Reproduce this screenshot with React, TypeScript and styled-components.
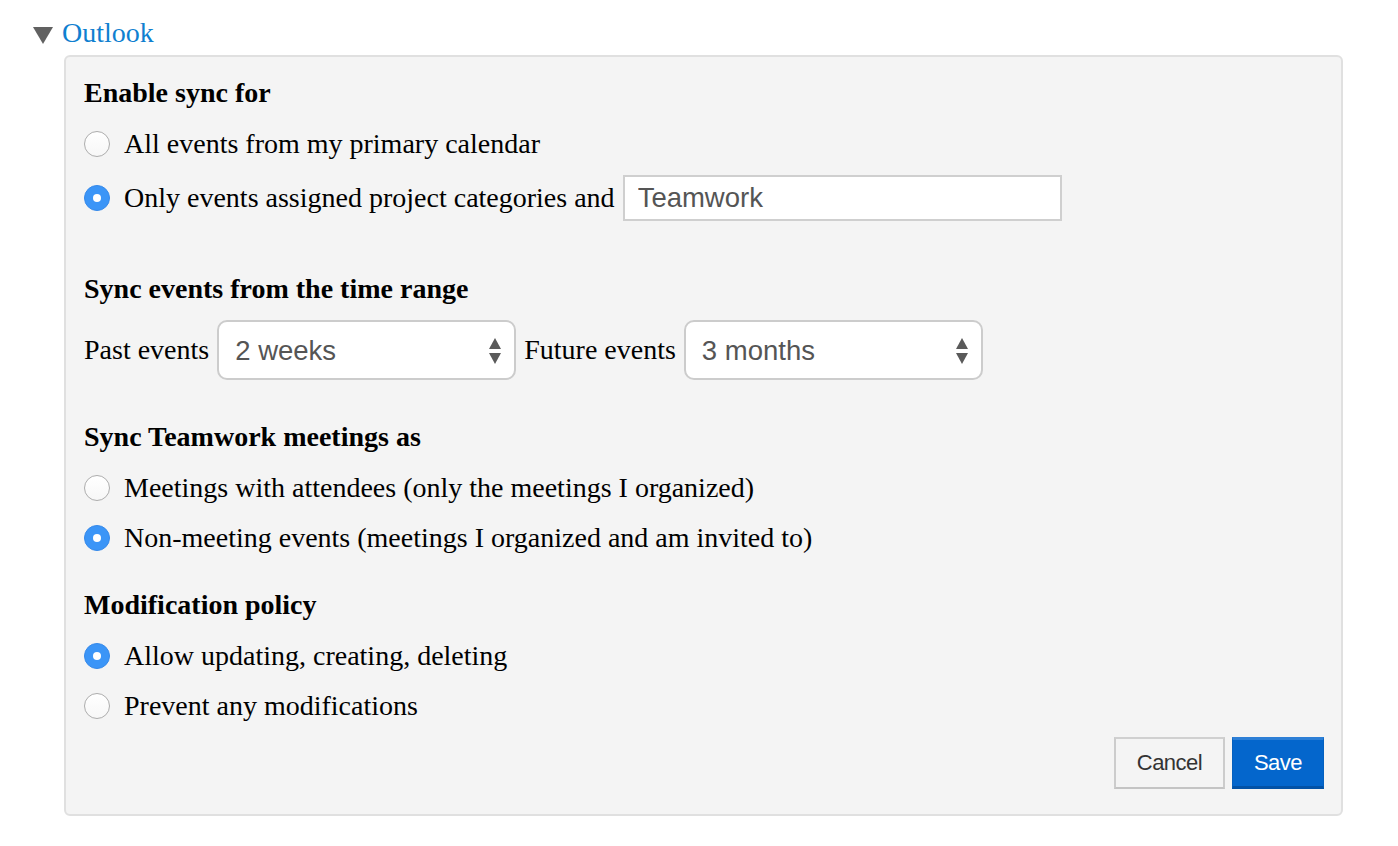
import styled, { createGlobalStyle } from 'styled-components';

const GlobalStyle = createGlobalStyle`
  body {
    margin: 0;
    background: #ffffff;
    font-family: "Liberation Serif", "Times New Roman", serif;
  }
`;

const Page = styled.div`
  width: 1398px;
  height: 846px;
  padding-top: 11px;
  box-sizing: border-box;
`;

const Header = styled.div`
  height: 44px;
  display: flex;
  align-items: center;
  padding-left: 33px;
  gap: 9px;
`;

const Caret = styled.span`
  width: 0;
  height: 0;
  margin-top: 4px;
  border-left: 10px solid transparent;
  border-right: 10px solid transparent;
  border-top: 17px solid #616161;
`;

const Title = styled.a`
  font-size: 28px;
  color: #0f80d0;
  text-decoration: none;
  line-height: 1;
`;

const Panel = styled.div`
  margin-left: 64px;
  width: 1279px;
  box-sizing: border-box;
  background: #f4f4f4;
  border: 2px solid #e0e0e0;
  border-radius: 6px;
  padding: 16px 17px 25px 18px;
`;

const Section = styled.section<{ $top: number }>`
  margin-top: ${(p) => p.$top}px;
`;

const Heading = styled.h3`
  margin: 0 0 6px;
  height: 40px;
  display: flex;
  align-items: center;
  font-size: 28px;
  font-weight: bold;
  color: #000;
`;

const Options = styled.div<{ $gap: number }>`
  display: flex;
  flex-direction: column;
  gap: ${(p) => p.$gap}px;
`;

const OptionRow = styled.label`
  height: 50px;
  display: flex;
  align-items: center;
  font-size: 28px;
  color: #000;
`;

const Radio = styled.span<{ $checked?: boolean }>`
  width: 26px;
  height: 26px;
  box-sizing: border-box;
  border-radius: 50%;
  margin-right: 14px;
  flex-shrink: 0;
  display: flex;
  align-items: center;
  justify-content: center;
  background: ${(p) => (p.$checked ? '#3b95f7' : 'linear-gradient(#ffffff, #f7f7f7)')};
  border: ${(p) => (p.$checked ? '1px solid #3589ea' : '1px solid #adadad')};
  &::after {
    content: '';
    display: ${(p) => (p.$checked ? 'block' : 'none')};
    width: 8px;
    height: 8px;
    border-radius: 50%;
    background: #ffffff;
  }
`;

const TextInput = styled.input`
  margin-left: 8px;
  width: 439px;
  height: 46px;
  box-sizing: border-box;
  border: 2px solid #cfcfcf;
  background: #ffffff;
  padding: 0 13px;
  font-family: "Liberation Sans", Arial, sans-serif;
  font-size: 27.5px;
  color: #555555;
  outline: none;
`;

const RangeRow = styled.div`
  margin-top: 11px;
  height: 60px;
  display: flex;
  align-items: center;
  font-size: 28px;
  color: #000;
`;

const RangeLabel = styled.span`
  margin-right: 8px;
`;

const Select = styled.div`
  width: 299px;
  height: 60px;
  flex-shrink: 0;
  box-sizing: border-box;
  border: 2px solid #cccccc;
  border-radius: 10px;
  background: #ffffff;
  margin-right: 8px;
  padding: 2px 12px 0 16px;
  display: flex;
  align-items: center;
  justify-content: space-between;
  font-family: "Liberation Sans", Arial, sans-serif;
  font-size: 27.5px;
  color: #555555;
`;

const Footer = styled.div`
  margin-top: 6px;
  display: flex;
  justify-content: flex-end;
  gap: 7px;
`;

const Button = styled.button<{ $primary?: boolean }>`
  height: 52px;
  box-sizing: border-box;
  font-family: "Liberation Sans", Arial, sans-serif;
  font-size: 22px;
  letter-spacing: -0.5px;
  cursor: pointer;
  padding: 0;
  width: ${(p) => (p.$primary ? '92px' : '111px')};
  color: ${(p) => (p.$primary ? '#ffffff' : '#333333')};
  background: ${(p) => (p.$primary ? '#0466cc' : '#f4f4f4')};
  border: ${(p) => (p.$primary ? '1px solid #0460bf' : '2px solid #cccccc')};
  border-bottom: ${(p) => (p.$primary ? '3px solid #0352a6' : '2px solid #c4c4c4')};
  border-top: ${(p) => (p.$primary ? '3px solid #2d7fd6' : '2px solid #d0d0d0')};
`;

const Arrows = () => (
  <svg width="14" height="28" viewBox="0 0 14 28">
    <path d="M7 1 L13 12 L1 12 Z" fill="#5a5a5a" />
    <path d="M1 16 L13 16 L7 27 Z" fill="#5a5a5a" />
  </svg>
);

const App = () => {
  return (
    <Page>
      <GlobalStyle />
      <Header>
        <Caret />
        <Title href="#">Outlook</Title>
      </Header>
      <Panel>
        <Section $top={0}>
          <Heading>Enable sync for</Heading>
          <Options $gap={4}>
            <OptionRow>
              <Radio />
              All events from my primary calendar
            </OptionRow>
            <OptionRow>
              <Radio $checked />
              Only events assigned project categories and
              <TextInput defaultValue="Teamwork" />
            </OptionRow>
          </Options>
        </Section>

        <Section $top={46}>
          <Heading>Sync events from the time range</Heading>
          <RangeRow>
            <RangeLabel>Past events</RangeLabel>
            <Select>
              2 weeks
              <Arrows />
            </Select>
            <RangeLabel>Future events</RangeLabel>
            <Select>
              3 months
              <Arrows />
            </Select>
          </RangeRow>
        </Section>

        <Section $top={37}>
          <Heading>Sync Teamwork meetings as</Heading>
          <Options $gap={0}>
            <OptionRow>
              <Radio />
              Meetings with attendees (only the meetings I organized)
            </OptionRow>
            <OptionRow>
              <Radio $checked />
              Non-meeting events (meetings I organized and am invited to)
            </OptionRow>
          </Options>
        </Section>

        <Section $top={22}>
          <Heading>Modification policy</Heading>
          <Options $gap={0}>
            <OptionRow>
              <Radio $checked />
              Allow updating, creating, deleting
            </OptionRow>
            <OptionRow>
              <Radio />
              Prevent any modifications
            </OptionRow>
          </Options>
        </Section>

        <Footer>
          <Button>Cancel</Button>
          <Button $primary>Save</Button>
        </Footer>
      </Panel>
    </Page>
  );
};

export default App;
